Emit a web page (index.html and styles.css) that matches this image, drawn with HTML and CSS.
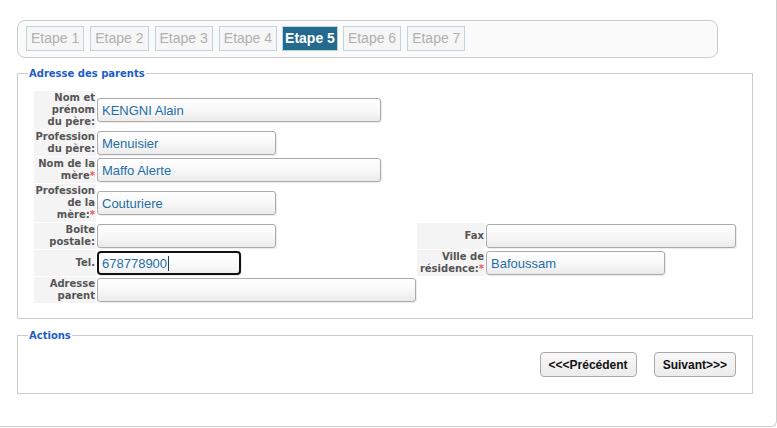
FILE: index.html
```html
<!DOCTYPE html>
<html lang="fr">
<head>
<meta charset="utf-8">
<title>Etape 5 - Adresse des parents</title>
<link rel="stylesheet" href="styles.css">
</head>
<body>
<div class="page">
  <div class="steps">
    <span class="step">Etape 1</span>
    <span class="step">Etape 2</span>
    <span class="step">Etape 3</span>
    <span class="step">Etape 4</span>
    <span class="step step-active">Etape 5</span>
    <span class="step">Etape 6</span>
    <span class="step">Etape 7</span>
  </div>

  <fieldset class="box box-form">
    <legend class="box-title">Adresse des parents</legend>
    <div class="form-grid">
      <div class="lbl"><span class="lbl-text">Nom et<br>prénom<br>du père:</span></div>
      <div class="field"><input class="inp w-l" type="text" value="KENGNI Alain"></div>
      <div class="cell-empty"></div><div class="cell-empty"></div>

      <div class="lbl"><span class="lbl-text">Profession<br>du père:</span></div>
      <div class="field"><input class="inp w-m" type="text" value="Menuisier"></div>
      <div class="cell-empty"></div><div class="cell-empty"></div>

      <div class="lbl"><span class="lbl-text">Nom de la<br>mère<span class="req">*</span></span></div>
      <div class="field"><input class="inp w-l" type="text" value="Maffo Alerte"></div>
      <div class="cell-empty"></div><div class="cell-empty"></div>

      <div class="lbl"><span class="lbl-text">Profession<br>de la<br>mère:<span class="req">*</span></span></div>
      <div class="field"><input class="inp w-m" type="text" value="Couturiere"></div>
      <div class="cell-empty"></div><div class="cell-empty"></div>

      <div class="lbl"><span class="lbl-text">Boite<br>postale:</span></div>
      <div class="field"><input class="inp w-m" type="text" value=""></div>
      <div class="lbl"><span class="lbl-text">Fax</span></div>
      <div class="field"><input class="inp w-full" type="text" value=""></div>

      <div class="lbl"><span class="lbl-text">Tel.</span></div>
      <div class="field"><span class="focus-wrap"><input class="inp inp-focus w-s" type="text" value="678778900"><span class="caret"></span></span></div>
      <div class="lbl"><span class="lbl-text">Ville de<br>résidence:<span class="req">*</span></span></div>
      <div class="field"><input class="inp w-m" type="text" value="Bafoussam"></div>

      <div class="lbl"><span class="lbl-text">Adresse<br>parent</span></div>
      <div class="field"><input class="inp w-full" type="text" value=""></div>
      <div class="cell-empty"></div><div class="cell-empty"></div>
    </div>
  </fieldset>

  <fieldset class="box box-actions">
    <legend class="box-title">Actions</legend>
    <div class="actions">
      <button class="btn" type="button">&lt;&lt;&lt;Précédent</button>
      <button class="btn" type="button">Suivant&gt;&gt;&gt;</button>
    </div>
  </fieldset>
</div>
</body>
</html>
```

FILE: styles.css
```css
html, body {
  margin: 0;
  padding: 0;
  background: #ffffff;
}

body {
  font-family: "Liberation Sans", Arial, sans-serif;
}

.page {
  width: 777px;
  height: 427px;
  box-sizing: border-box;
  padding: 20px 0 0 17px;
  border-right: 1px solid #cfcfcf;
  border-bottom: 1px solid #cfcfcf;
  border-bottom-right-radius: 6px;
  overflow: hidden;
}

/* ---- step tabs ---- */
.steps {
  width: 701px;
  height: 38px;
  box-sizing: border-box;
  border: 1px solid #cccccc;
  border-radius: 8px;
  background: #fafafa;
  padding: 5px 8px 6px;
  display: flex;
  gap: 6px;
}

.step {
  display: block;
  height: 25px;
  box-sizing: border-box;
  border: 1px solid #bcd6de;
  padding: 0 4px;
  line-height: 23px;
  font-family: "Liberation Sans", Arial, sans-serif;
  font-size: 14px;
  color: #b0b0b0;
  background: #f6f6f6;
  white-space: nowrap;
}

.step-active {
  background: #236a8e;
  color: #ffffff;
  font-weight: bold;
  padding: 0 2px;
  margin-left: -1px;
  margin-right: -1px;
}

/* ---- fieldsets ---- */
.box {
  width: 736px;
  box-sizing: border-box;
  margin: 9px 0 0;
  border: 1px solid #cccccc;
  padding: 11px 16px 15px;
  min-inline-size: 0;
}

.box-actions {
  margin-top: 10px;
  padding-top: 10px;
  padding-bottom: 16px;
}

.box-title {
  font-family: "DejaVu Sans", Verdana, sans-serif;
  font-size: 10px;
  font-weight: bold;
  line-height: 13px;
  color: #1c5cc8;
  padding: 0 1px;
  margin-left: -6px;
}

/* ---- form grid ---- */
.form-grid {
  display: grid;
  grid-template-columns: 62px 319px 68px 1fr;
  column-gap: 1px;
  row-gap: 1px;
}

.lbl {
  display: flex;
  align-items: center;
  justify-content: flex-end;
  background: #f4f4f4;
  padding: 1px 1px 1px 0;
  font-family: "DejaVu Sans", Verdana, sans-serif;
  font-size: 10px;
  font-weight: bold;
  line-height: 12px;
  color: #555555;
}

.lbl-text {
  display: block;
  text-align: right;
  white-space: nowrap;
}

.req {
  color: #ee5555;
}

.field {
  display: flex;
  align-items: center;
}

.inp {
  display: block;
  height: 24px;
  box-sizing: border-box;
  margin: 0;
  border: 1px solid #ababab;
  border-radius: 3px;
  padding: 0 4px;
  font-family: "Liberation Sans", Arial, sans-serif;
  font-size: 13px;
  color: #1f6ea8;
  background: linear-gradient(to bottom, #ffffff 0%, #f7f7f7 55%, #ebebeb 100%);
  box-shadow: 1px 1px 1px rgba(0, 0, 0, 0.08);
  outline: none;
}

.inp-focus {
  border: 2px solid #111111;
  border-radius: 4px;
  padding: 0 3px;
  background: linear-gradient(to bottom, #ffffff 0%, #fafafa 60%, #f0f0f0 100%);
}

.focus-wrap {
  position: relative;
  display: block;
}

.caret {
  position: absolute;
  left: 71px;
  top: 5px;
  width: 1px;
  height: 15px;
  background: #1f3f66;
}

.w-l { width: 284px; }
.w-m { width: 179px; }
.w-s { width: 144px; }
.w-full { width: 100%; }

/* ---- actions ---- */
.actions {
  display: flex;
  justify-content: flex-end;
  gap: 17px;
}

.btn {
  height: 25px;
  box-sizing: border-box;
  margin: 0;
  padding: 0 8px;
  border: 1px solid #a9a9a9;
  border-radius: 4px;
  background: linear-gradient(to bottom, #f7f7f7 0%, #ececec 100%);
  font-family: "Liberation Sans", Arial, sans-serif;
  font-size: 12px;
  font-weight: bold;
  color: #111111;
  cursor: pointer;
}
```
